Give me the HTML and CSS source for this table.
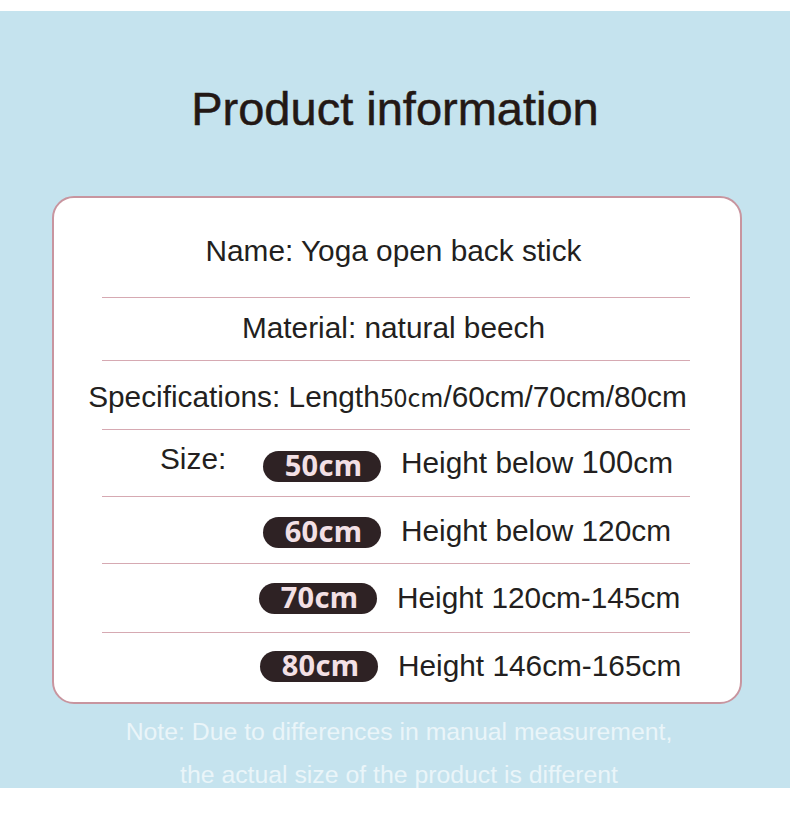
FILE: index.html
```html
<!DOCTYPE html>
<html lang="en">
<head>
<meta charset="utf-8">
<title>Product information</title>
<link rel="stylesheet" href="styles.css">
</head>
<body>
<div class="page">
  <h1 class="title">Product information</h1>
  <div class="card">
    <div class="row r1"><span class="txt shift-a">Name: Yoga open back stick</span></div>
    <div class="sep"></div>
    <div class="row r2"><span class="txt shift-a">Material: natural beech</span></div>
    <div class="sep"></div>
    <div class="row r3"><span class="txt shift-b">Specifications: Length<span class="alt">50cm</span>/60cm/70cm/80cm</span></div>
    <div class="sep"></div>
    <div class="row row-size r4">
      <span class="lead lead-a"><span class="size-label">Size:</span></span>
      <span class="badge badge-low">50cm</span>
      <span class="txt">Height below <span class="num">100</span>cm</span>
    </div>
    <div class="sep"></div>
    <div class="row row-size r5">
      <span class="lead lead-a"></span>
      <span class="badge badge-mid">60cm</span>
      <span class="txt">Height below 120cm</span>
    </div>
    <div class="sep"></div>
    <div class="row row-size r6">
      <span class="lead lead-b"></span>
      <span class="badge">70cm</span>
      <span class="txt">Height 120cm-145cm</span>
    </div>
    <div class="sep"></div>
    <div class="row row-size r7">
      <span class="lead lead-c"></span>
      <span class="badge">80cm</span>
      <span class="txt">Height 146cm-165cm</span>
    </div>
  </div>
  <div class="note">
    <div class="note-line">Note: Due to differences in manual measurement,</div>
    <div class="note-line">the actual size of the product is different</div>
  </div>
</div>
</body>
</html>
```

FILE: styles.css
```css
html, body {
  margin: 0;
  padding: 0;
  background: #ffffff;
}

body {
  font-family: "Liberation Sans", Arial, sans-serif;
  color: #231f20;
}

.page {
  margin-top: 11px;
  height: 777px;
  overflow: hidden;
  background: #c5e3ee;
  padding-top: 70px;
  box-sizing: border-box;
}

.title {
  margin: 0;
  text-align: center;
  font-size: 47px;
  line-height: 56px;
  font-weight: normal;
  color: #231815;
  -webkit-text-stroke: 0.5px #231815;
}

.card {
  margin: 59px 48px 0 52px;
  background: #ffffff;
  border: 2px solid #c8959f;
  border-radius: 22px;
}

.row {
  display: flex;
  align-items: center;
  justify-content: center;
  box-sizing: border-box;
  font-size: 29.8px;
  line-height: 30px;
  white-space: nowrap;
}

.r1 { height: 99px; padding-top: 6px; }
.r2 { height: 62px; padding-bottom: 2px; }
.r3 { height: 68px; padding-top: 3px; }
.r4 { height: 66px; }
.r5 { height: 66px; padding-top: 2px; }
.r6 { height: 68px; }
.r7 { height: 69px; padding-bottom: 3px; }

.shift-a { margin-right: 7px; }
.shift-b { margin-right: 19px; }

.alt {
  font-family: "Noto Sans CJK SC", "Liberation Sans", sans-serif;
  font-size: 25px;
}

.num {
  font-size: 31px;
}

.sep {
  height: 1px;
  margin: 0 50px 0 48px;
  background: #d6a9b2;
}

.row-size {
  justify-content: flex-start;
}

.lead {
  flex: none;
  display: flex;
  align-items: center;
  box-sizing: border-box;
  padding-left: 106px;
}

.lead-a { width: 209px; }
.lead-b { width: 205px; }
.lead-c { width: 206px; }

.size-label {
  margin-bottom: 9px;
}

.badge {
  flex: none;
  width: 118px;
  height: 31px;
  margin-right: 20px;
  border-radius: 16px;
  background: #2e2224;
  color: #f3e0e5;
  font-family: "Noto Sans", "Liberation Sans", sans-serif;
  font-weight: bold;
  font-size: 29px;
  line-height: 28px;
  text-align: center;
  letter-spacing: 0.3px;
  padding-left: 3px;
  box-sizing: border-box;
}

.badge-low { margin-top: 7px; }
.badge-mid { margin-top: 3px; }

.note {
  margin-top: 5.5px;
  padding-left: 8px;
  text-align: center;
  color: #eaf5f9;
  font-size: 24.8px;
  line-height: 43px;
}

.note-line {
  white-space: nowrap;
}
```
